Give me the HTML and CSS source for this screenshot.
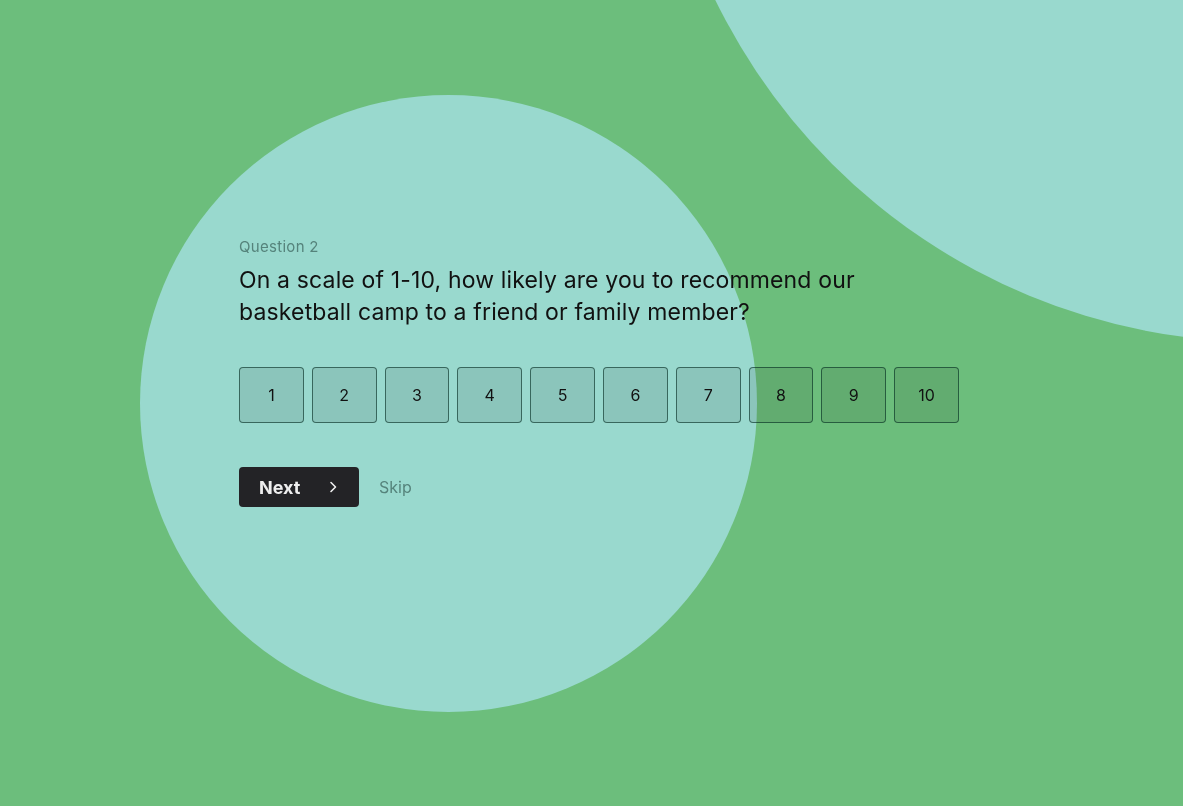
FILE: index.html
```html
<!DOCTYPE html>
<html lang="en">
<head>
  <meta charset="UTF-8">
  <meta name="viewport" content="width=device-width, initial-scale=1.0">
  <title>Question 2</title>
  <link rel="stylesheet" href="styles.css">
</head>
<body>

<!-- background shapes -->
<div class="backdrop">
  <div class="blob blob-left"></div>
  <div class="blob blob-right"></div>
</div>

<div class="survey">
  <div class="question-label">Question 2</div>
  <h1 class="question-title">On a scale of 1-10, how likely are you to recommend our<br>basketball camp to a friend or family member?</h1>

  <div class="scale">
    <button class="scale-btn">1</button>
    <button class="scale-btn">2</button>
    <button class="scale-btn">3</button>
    <button class="scale-btn">4</button>
    <button class="scale-btn">5</button>
    <button class="scale-btn">6</button>
    <button class="scale-btn">7</button>
    <button class="scale-btn">8</button>
    <button class="scale-btn">9</button>
    <button class="scale-btn">10</button>
  </div>

  <div class="actions">
    <button class="next-btn">
      Next
      <svg width="16" height="16" viewBox="0 0 16 16" fill="none">
        <path d="M6 3.5 L10.5 8 L6 12.5" stroke="currentColor" stroke-width="1.6" stroke-linecap="round" stroke-linejoin="round"/>
      </svg>
    </button>
    <a class="skip-link" href="#">Skip</a>
  </div>
</div>

</body>
</html>
```

FILE: styles.css
```css
html, body {
  height: 100%;
}
body {
  background-color: #6cbe7c;
  font-family: Inter, "Noto Sans", Arial, sans-serif;
  margin: 0;
  padding: 0;
  overflow: hidden;
}
.backdrop {
  position: fixed;
  top: 0;
  left: 0;
  right: 0;
  bottom: 0;
  overflow: hidden;
}
.blob {
  position: absolute;
  border-radius: 50%;
  background-color: #99d9ce;
}
.blob-left {
  left: 140px;
  top: 95px;
  width: 617px;
  height: 617px;
}
.blob-right {
  left: 654px;
  top: -874px;
  width: 1216px;
  height: 1216px;
}
.survey {
  position: relative;
  width: 720px;
  margin-left: 239px;
  padding-top: 237px;
}
.question-label {
  font-size: 15px;
  line-height: 20px;
  letter-spacing: 0.3px;
  color: #55837b;
}
.question-title {
  margin: 7px 0 0;
  font-size: 23px;
  line-height: 32px;
  font-weight: 400;
  color: #111;
  letter-spacing: 0.15px;
}
.scale {
  display: flex;
  gap: 8px;
  margin-top: 39px;
}
.scale-btn {
  flex: 1;
  height: 56px;
  padding: 0;
  background-color: rgba(0, 0, 0, 0.09);
  border: 1px solid rgba(0, 40, 30, 0.6);
  border-radius: 4px;
  font-family: inherit;
  font-size: 16px;
  color: #111;
  cursor: pointer;
}
.actions {
  display: flex;
  align-items: center;
  gap: 20px;
  margin-top: 44px;
}
.next-btn {
  display: flex;
  align-items: center;
  justify-content: space-between;
  width: 120px;
  height: 40px;
  padding: 0 18px 0 20px;
  background-color: #232326;
  color: #eee;
  border: none;
  border-radius: 4px;
  font-family: inherit;
  font-size: 18px;
  font-weight: 700;
  cursor: pointer;
}
.skip-link {
  font-size: 16px;
  color: #55837b;
  text-decoration: none;
}
```
